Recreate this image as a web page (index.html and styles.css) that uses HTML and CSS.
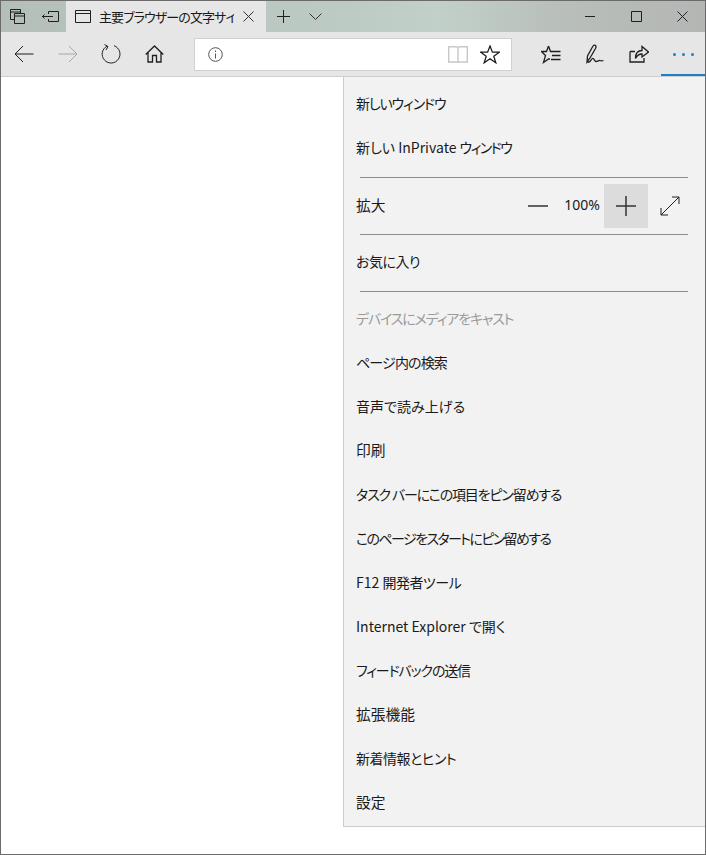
FILE: index.html
```html
<!DOCTYPE html>
<html lang="ja">
<head>
<meta charset="utf-8">
<title>Edge</title>
<link rel="stylesheet" href="styles.css">
</head>
<body>
<div class="window">
  <header class="titlebar">
    <div class="tab-tools">
      <button class="tb tb-first"><svg width="15" height="15" viewBox="0 0 15 15"><path d="M4 10.500H.5V.5H10.500V4M.5 3H10.500M4.500 4.500H14.500V14.500H4.500ZM4.500 7H14.500" class="ln"/></svg></button>
      <button class="tb tb-aside"><svg width="17" height="11" viewBox="0 0 17 11"><path d="M6.500 3V.5H16.500V10.500H6.500V8M0 5.500H11M2.500 3.500L.5 5.500L2.500 7.500" class="ln"/></svg></button>
    </div>
    <div class="tab">
      <svg class="tab-icon" width="16" height="13" viewBox="0 0 16 13"><path d="M.5 .5H15.500V12.500H.5ZM.5 3.500H15.500" class="ln"/></svg>
      <span class="tab-title">主要ブラウザーの文字サイズ</span>
      <svg class="tab-close" width="11" height="11" viewBox="0 0 11 11"><path d="M.5 .5L10.500 10.500M10.500 .5L.5 10.500" class="ln thin"/></svg>
    </div>
    <button class="tb tb-new"><svg width="13" height="13" viewBox="0 0 13 13"><path d="M6.500 0V13M0 6.500H13" class="ln"/></svg></button>
    <button class="tb tb-list"><svg width="13" height="7" viewBox="0 0 13 7"><path d="M.5 .5L6.500 6.500L12.500 .5" class="ln thin"/></svg></button>
    <div class="win-controls">
      <button class="wc"><svg width="11" height="11" viewBox="0 0 11 11"><path d="M0 5.500H10" class="ln"/></svg></button>
      <button class="wc"><svg width="11" height="11" viewBox="0 0 11 11"><path d="M.5 .5H10.500V10.500H.5Z" class="ln"/></svg></button>
      <button class="wc"><svg width="11" height="11" viewBox="0 0 11 11"><path d="M.5 .5L10.500 10.500M10.500 .5L.5 10.500" class="ln"/></svg></button>
    </div>
  </header>
  <nav class="toolbar">
    <div class="nav-btns">
      <button class="nb"><svg width="20" height="18" viewBox="0 0 20 18"><path d="M19.500 9H1M9 1L1 9L9 17" class="ln"/></svg></button>
      <button class="nb dim"><svg width="20" height="18" viewBox="0 0 20 18"><path d="M.5 9H19M11 1L19 9L11 17" class="ln"/></svg></button>
      <button class="nb"><svg width="20" height="20" viewBox="0 0 20 20"><path d="M6 2.200A8.900 8.900 0 1 0 13 1.700M3.500 .5L7 2.500L5 6" class="ln"/></svg></button>
      <button class="nb"><svg width="19" height="18" viewBox="0 0 19 18"><path d="M.7 9.500L9.500 1L18.300 9.500M3 7.500V17H7.500V10.500H11.500V17H16V7.500" class="ln bold"/></svg></button>
    </div>
    <div class="address">
      <svg width="15" height="15" viewBox="0 0 15 15"><circle cx="7.500" cy="7.500" r="6.800" class="ln gray"/><path d="M7.500 6.500V11.500M7.500 3.500V5" class="ln gray"/></svg>
      <div class="addr-end">
        <svg width="20" height="17" viewBox="0 0 20 17"><path d="M.7 16V.7H8C9 .7 9.700 1.200 10 2C10.300 1.200 11 .7 12 .7H19.300V16H12C11 16 10.300 16.300 10 16.500C9.700 16.300 9 16 8 16ZM10 2V16.500" class="ln pale"/></svg>
        <svg width="20" height="19" viewBox="0 0 20 19"><path d="M10 1L12.400 7.200H19.300L13.800 11.200L15.800 17.800L10 13.800L4.200 17.800L6.200 11.200L.7 7.200H7.600Z" class="ln bold"/></svg>
      </div>
    </div>
    <div class="tools">
      <button class="tl"><svg width="20" height="19" viewBox="0 0 20 19"><path d="M7.500 1L9.500 6.500H19.500M7.500 1L5.500 6.500H.5L4.500 10.500L2.500 17.500L7.500 14H9M11 10.500H19.500M10 14.500H19.500" class="ln bold"/></svg></button>
      <button class="tl"><svg width="18" height="20" viewBox="0 0 18 20"><path d="M1 18L1.500 12L7 2C7.500 1 9 .7 9.500 1.500C10.200 2.300 10 3.500 9.500 4.500L4 14L1 18ZM1 18H3C4.500 18 5 15 6.500 14.500C8 14 8.500 17.500 10 17.500C12 17.500 13 16 14 16.500C15 17 16 17 17.500 16.500" class="ln bold"/></svg></button>
      <button class="tl"><svg width="20" height="18" viewBox="0 0 20 18"><path d="M1 6.500V17H15V13M1 6.500H6M6.500 13.500C6.500 8.500 9 5.500 13 5.500V1.500L19.500 7L13 12V9C10 9 8 10.500 6.500 13.500Z" class="ln bold"/></svg></button>
      <button class="tl tl-more"><span class="dots"><i></i><i></i><i></i></span></button>
    </div>
  </nav>
  <div class="content">
    <aside class="menu">
      <div class="item"><span class="tight-3">新しいウィンドウ</span></div>
      <div class="item"><span>新しい InPrivate <span class="tight-4">ウィンドウ</span></span></div>
      <hr class="sep sep-a">
      <div class="item zoom">
        <span class="kanji">拡大</span>
        <div class="zoom-ctl">
          <button class="zb"><svg width="20" height="20" viewBox="0 0 20 20"><path d="M0 10H20" class="ln mid"/></svg></button>
          <span class="zoom-val">100%</span>
          <button class="zb hover"><svg width="20" height="20" viewBox="0 0 20 20"><path d="M0 10H20M10 0V20" class="ln mid"/></svg></button>
          <button class="zb"><svg width="20" height="20" viewBox="0 0 20 20"><path d="M1 19L19 1M12 1H19V8M1 12V19H8" class="ln"/></svg></button>
        </div>
      </div>
      <hr class="sep sep-b">
      <div class="item"><span class="tight-1">お気に入り</span></div>
      <hr class="sep sep-c">
      <div class="item disabled"><span class="tight-3">デバイスにメディアをキャスト</span></div>
      <div class="item"><span class="tight-2">ページ内の検索</span></div>
      <div class="item"><span>音声で読み上げる</span></div>
      <div class="item"><span class="kanji">印刷</span></div>
      <div class="item"><span class="tight-3">タスク バーにこの項目をピン留めする</span></div>
      <div class="item"><span class="tight-4">このページをスタートにピン留めする</span></div>
      <div class="item"><span>F12 <span class="tight-1">開発者ツール</span></span></div>
      <div class="item"><span>Internet Explorer で開く</span></div>
      <div class="item"><span class="tight-3">フィードバックの送信</span></div>
      <div class="item"><span class="kanji">拡張機能</span></div>
      <div class="item"><span class="tight-1">新着情報とヒント</span></div>
      <div class="item"><span class="kanji">設定</span></div>
    </aside>
  </div>
</div>
</body>
</html>
```
FILE: styles.css
```css
* { box-sizing: border-box; }
html, body { margin: 0; height: 100%; background: #fff; }
body { font-family: "Noto Sans CJK JP", "Noto Sans", sans-serif; font-size: 14px; color: #1a1a1a; font-feature-settings: "palt"; }
button { border: 0; background: none; padding: 0; margin: 0; display: flex; align-items: center; justify-content: center; }
svg { display: block; }
.ln { fill: none; stroke: #1f1f1f; stroke-width: 1; }
.thin { stroke: #333; }
.bold { stroke-width: 1.3; }
.mid { stroke-width: 1.5; stroke: #333; }
.gray { stroke: #555; }
.pale { stroke: #c8c8c8; stroke-width: 1.4; }
.dim .ln { stroke: #a6a6a6; }

.window { height: 855px; width: 706px; border: 1px solid #6b6b6b; display: flex; flex-direction: column; overflow: hidden; }

.titlebar { height: 31px; flex: none; display: flex; align-items: stretch; background: linear-gradient(90deg, #b3bfb8 0, #bccbc4 50%, #c2d0ca 62%, #b8beb9 80%, #b4b6b4 100%); }
.tab-tools { display: flex; width: 65px; }
.tb { height: 31px; }
.tb-first { width: 31px; padding-left: 1px; }
.tb-aside { width: 34px; padding-left: 2px; }
.tab { width: 200px; background: #e6e6e6; display: flex; align-items: center; padding-left: 9px; }
.tab-title { width: 135px; margin-left: 8px; white-space: nowrap; overflow: hidden; font-size: 13px; letter-spacing: -0.9px; line-height: 20px; }
.tab-close { margin-left: 9px; }
.tb-new { width: 36px; margin-left: -1px; }
.tb-list { width: 28px; }
.win-controls { margin-left: auto; display: flex; }
.wc { width: 46px; height: 31px; }

.toolbar { height: 44px; flex: none; background: #e6e6e6; display: flex; align-items: center; }
.nav-btns { display: flex; padding-left: 1px; }
.nb { width: 44px; height: 44px; }
.nb:nth-child(even) { width: 43px; }
.address { width: 318px; height: 33px; margin-left: 18px; flex: none; background: #fff; border: 1px solid #d0d0d0; display: flex; align-items: center; padding-left: 13px; padding-right: 11px; justify-content: space-between; }
.addr-end { display: flex; gap: 12px; align-items: center; }
.tools { display: flex; margin-left: 17px; flex: none; }
.tl { width: 44px; height: 44px; }
.tl-more { position: relative; }
.tl-more::after { content: ""; position: absolute; left: 0; right: 0; bottom: 0; height: 2px; background: #1f7fc4; }
.dots { display: flex; gap: 6px; }
.dots i { width: 3px; height: 3px; background: #1f7fc4; border-radius: 50%; }

.content { flex: 1; display: flex; justify-content: flex-end; border-top: 1px solid #cfcfcf; align-items: flex-start; }
.menu { width: 362px; background: #f2f2f2; border-left: 1px solid #ccc; border-bottom: 1px solid #ccc; padding-top: 5px; padding-bottom: 1px; }
.item { height: 44px; display: flex; align-items: center; padding-left: 12px; padding-bottom: 2px; white-space: pre; line-height: 20px; }
.kanji { font-size: 14.750px; }
.tight-1 { letter-spacing: -0.5px; }
.tight-2 { letter-spacing: -0.850px; }
.tight-3 { letter-spacing: -1.150px; }
.tight-4 { letter-spacing: -1.600px; }
.disabled { color: #9a9a9a; }
.sep { height: 1px; border: 0; margin: 0 17px 0 16px; background: #8c8c8c; }
.sep-a { margin-top: 7px; margin-bottom: 6px; }
.sep-b { margin-top: 6px; margin-bottom: 5px; }
.sep-c { margin-top: 7px; margin-bottom: 5px; }
.zoom { justify-content: space-between; padding-right: 13px; padding-bottom: 0; }
.zoom > .kanji { padding-bottom: 2px; }
.zoom-ctl { display: flex; align-items: center; }
.zb { width: 44px; height: 44px; }
.zoom-val { width: 44px; text-align: center; font-family: "Noto Sans", sans-serif; font-size: 14px; padding-bottom: 2px; }
.hover { background: #dcdcdc; }
```
